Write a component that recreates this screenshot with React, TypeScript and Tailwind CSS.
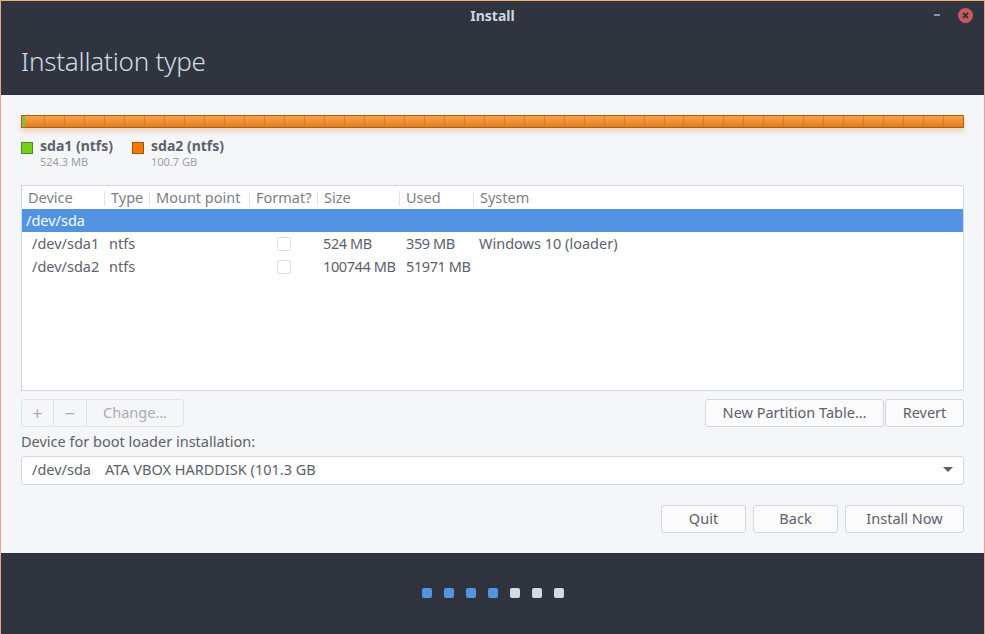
const cols = [
  { label: "Device", w: "w-[83px]" },
  { label: "Type", w: "w-[45px]" },
  { label: "Mount point", w: "w-[100px]" },
  { label: "Format?", w: "w-[68px]" },
  { label: "Size", w: "w-[82px]" },
  { label: "Used", w: "w-[74px]" },
  { label: "System", w: "flex-1" },
];

const rows = [
  { dev: "/dev/sda1", type: "ntfs", size: "524 MB", used: "359 MB", system: "Windows 10 (loader)" },
  { dev: "/dev/sda2", type: "ntfs", size: "100744 MB", used: "51971 MB", system: "" },
];

function Btn({ children, className = "" }: { children: React.ReactNode; className?: string }) {
  return (
    <div
      className={`h-[28px] flex items-center justify-center rounded-[3px] border border-[#cfd6e6] bg-[#fbfbfc] text-[14.5px] text-[#5c616c] ${className}`}
    >
      {children}
    </div>
  );
}

export default function App() {
  const segments = Array.from({ length: 47 });
  return (
    <div
      className="w-[985px] h-[634px] flex flex-col bg-[#f5f6f7] border-x border-[#e9a591] overflow-hidden"
      style={{ fontFamily: '"Noto Sans", "Open Sans", sans-serif' }}
    >
      {/* Title bar + header */}
      <div className="bg-[#2f343f] h-[95px] flex flex-col border-t border-[#f0b070]">
        <div className="relative h-[29px] flex items-center justify-center">
          <span className="text-[14px] font-bold text-[#cfd6e0]">Install</span>
          <div className="absolute right-[44px] top-[13px] w-[6px] h-[2px] bg-[#8c93a0]" />
          <div className="absolute right-[11px] top-[7px] w-[15px] h-[15px] rounded-full bg-[#cc575d] flex items-center justify-center">
            <svg width="7" height="7" viewBox="0 0 7 7">
              <path d="M1 1L6 6M6 1L1 6" stroke="#2f343f" strokeWidth="1.8" />
            </svg>
          </div>
        </div>
        <div className="pl-[20px] pt-[14px]">
          <span className="text-[26px] leading-[34px] font-light text-[#d3dae3] tracking-[-0.2px]">Installation type</span>
        </div>
      </div>

      {/* Content */}
      <div className="flex-1 flex flex-col px-[20px] pt-[20px]">
        {/* Partition bar */}
        <div className="h-[13px] flex border border-[#b0600a] bg-gradient-to-b from-[#f8a44a] to-[#e07c1c] shadow-[0_4px_5px_rgba(200,120,40,0.25)]">
          <div className="w-[3px] bg-[#7cc440]" />
          {segments.map((_, i) => (
            <div key={i} className="flex-1 border-r border-[#d07722]/70 last:border-r-0" />
          ))}
        </div>

        {/* Legend */}
        <div className="flex gap-[19px] mt-[9px]">
          <div className="flex gap-[7px]">
            <div className="w-[12px] h-[12px] mt-[5px] bg-[#73d216] border border-[#4e8a14]" />
            <div className="flex flex-col">
              <span className="text-[14px] leading-[18px] font-bold text-[#5c616c]">sda1 (ntfs)</span>
              <span className="text-[11px] leading-[13px] text-[#9a9ea6]">524.3 MB</span>
            </div>
          </div>
          <div className="flex gap-[7px]">
            <div className="w-[12px] h-[12px] mt-[5px] bg-[#f57900] border border-[#a55206]" />
            <div className="flex flex-col">
              <span className="text-[14px] leading-[18px] font-bold text-[#5c616c]">sda2 (ntfs)</span>
              <span className="text-[11px] leading-[13px] text-[#9a9ea6]">100.7 GB</span>
            </div>
          </div>
        </div>

        {/* Table */}
        <div className="mt-[17px] h-[206px] bg-white border border-[#cfd6e6] flex flex-col text-[14.5px] text-[#5c616c]">
          <div className="h-[23px] flex items-center">
            {cols.map((c, i) => (
              <div key={c.label} className={`${c.w} h-full flex items-center relative pl-[6px]`}>
                <span className="text-[#7b7f87]">{c.label}</span>
                {i < cols.length - 1 && (
                  <div className="absolute right-0 top-[5px] h-[15px] w-px bg-[#e2e4e8]" />
                )}
              </div>
            ))}
          </div>
          <div className="h-[23px] flex items-center bg-[#5294e2] text-white pl-[4px]">/dev/sda</div>
          {rows.map((r) => (
            <div key={r.dev} className="h-[23px] flex items-center">
              <div className="w-[83px] pl-[10px]">{r.dev}</div>
              <div className="w-[45px] pl-[4px]">{r.type}</div>
              <div className="w-[100px]" />
              <div className="w-[68px] flex justify-center">
                <div className="w-[14px] h-[14px] border border-[#dcdfe3] rounded-[2px] bg-white" />
              </div>
              <div className="w-[82px] pl-[5px] tracking-[-0.4px]">{r.size}</div>
              <div className="w-[74px] pl-[6px] tracking-[-0.4px]">{r.used}</div>
              <div className="flex-1 pl-[5px]">{r.system}</div>
            </div>
          ))}
        </div>

        {/* Table controls */}
        <div className="flex justify-between mt-[8px]">
          <div className="flex h-[28px] rounded-[3px] border border-[#dfe3ea] bg-[#f5f6f7] text-[14.5px] text-[#a9acb2]">
            <div className="w-[32px] flex items-center justify-center border-r border-[#dfe3ea] text-[18px]">+</div>
            <div className="w-[33px] flex items-center justify-center border-r border-[#dfe3ea] text-[18px]">−</div>
            <div className="w-[96px] flex items-center justify-center">Change…</div>
          </div>
          <div className="flex gap-px">
            <Btn className="w-[179px]">New Partition Table…</Btn>
            <Btn className="w-[79px]">Revert</Btn>
          </div>
        </div>

        <div className="mt-[4px] text-[14.5px] text-[#5c616c]">Device for boot loader installation:</div>

        {/* Combo */}
        <div className="mt-[3px] h-[29px] flex items-center bg-white border border-[#cfd6e6] rounded-[3px] text-[14.5px] text-[#5c616c] pl-[10px] pr-[10px]">
          <span>/dev/sda</span>
          <span className="ml-[14px]">ATA VBOX HARDDISK (101.3 GB</span>
          <svg className="ml-auto" width="10" height="6" viewBox="0 0 10 6">
            <path d="M0 0H10L5 5Z" fill="#5c616c" />
          </svg>
        </div>

        {/* Bottom buttons */}
        <div className="flex justify-end gap-[7px] mt-[20px]">
          <Btn className="w-[85px]">Quit</Btn>
          <Btn className="w-[85px]">Back</Btn>
          <Btn className="w-[119px]">Install Now</Btn>
        </div>
      </div>

      {/* Footer */}
      <div className="h-[81px] bg-[#2f343f] flex items-center justify-center gap-[12px] pb-[2px]">
        {[0, 1, 2, 3, 4, 5, 6].map((i) => (
          <div
            key={i}
            className={`w-[10px] h-[10px] rounded-[2px] ${i < 4 ? "bg-[#5294e2]" : "bg-[#d3dae3]"}`}
          />
        ))}
      </div>
    </div>
  );
}
